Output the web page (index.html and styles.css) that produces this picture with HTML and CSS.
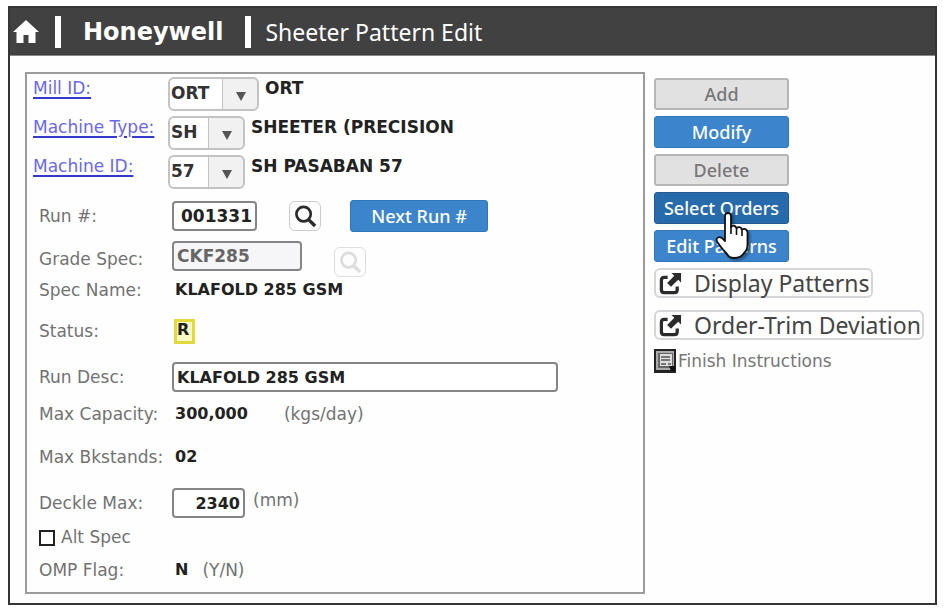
FILE: index.html
```html
<!DOCTYPE html>
<html lang="en">
<head>
<meta charset="utf-8">
<title>Sheeter Pattern Edit</title>
<link rel="stylesheet" href="styles.css">
</head>
<body>
<svg class="symbols" aria-hidden="true">
  <symbol id="search" viewBox="0 0 24 24">
    <circle cx="10" cy="9.500" r="7.500" fill="none" stroke="currentColor" stroke-width="2.800"/>
    <path d="M15.500 15.500 22 22" stroke="currentColor" stroke-width="3.600"/>
  </symbol>
  <symbol id="external" viewBox="0 0 24 24">
    <path d="M9 5.500H5.500Q2.500 5.500 2.500 8.500V18.500Q2.500 21.500 5.500 21.500H16Q19 21.500 19 18.500V15" fill="none" stroke="currentColor" stroke-width="3.400"/>
    <path d="M13 1H23V11L20 8 12.500 15.500 8.500 11.500 16 4Z" fill="currentColor"/>
  </symbol>
</svg>
<div class="frame">
  <header class="topbar">
    <a class="home" href="#" aria-label="Home"><svg viewBox="0 0 26 23"><path d="M13 0 26 12H22.500V23H15.500V15H10.500V23H3.500V12H0Z" fill="#fff"/></svg></a>
    <span class="bar"></span>
    <span class="brand">Honeywell</span>
    <span class="bar"></span>
    <h1>Sheeter Pattern Edit</h1>
  </header>
  <main>
    <form class="panel">
      <div class="row pick">
        <a class="label" href="#">Mill ID:</a>
        <span class="combo wide"><select aria-label="Mill ID"><option>ORT</option></select></span>
        <b class="note">ORT</b>
      </div>
      <div class="row pick">
        <a class="label" href="#">Machine Type:</a>
        <span class="combo"><select aria-label="Machine Type"><option>SH</option></select></span>
        <b class="note">SHEETER (PRECISION</b>
      </div>
      <div class="row pick">
        <a class="label" href="#">Machine ID:</a>
        <span class="combo"><select aria-label="Machine ID"><option>57</option></select></span>
        <b class="note">SH PASABAN 57</b>
      </div>
      <div class="row run">
        <label class="label" for="run">Run #:</label>
        <input class="box run-box" id="run" value="001331">
        <button type="button" class="lookup" aria-label="Find run"><svg><use href="#search"/></svg></button>
        <button type="button" class="btn next">Next Run #</button>
      </div>
      <div class="row grade">
        <label class="label" for="grade">Grade Spec:</label>
        <input class="box grade-box" id="grade" value="CKF285" disabled>
        <button type="button" class="lookup" aria-label="Find grade" disabled><svg><use href="#search"/></svg></button>
      </div>
      <div class="row spec"><span class="label">Spec Name:</span><b class="value">KLAFOLD 285 GSM</b></div>
      <div class="row state"><span class="label">Status:</span><b class="status">R</b></div>
      <div class="row desc">
        <label class="label" for="desc">Run Desc:</label>
        <input class="box desc-box" id="desc" value="KLAFOLD 285 GSM">
      </div>
      <div class="row capacity"><span class="label">Max Capacity:</span><b class="value">300,000</b><span class="unit far">(kgs/day)</span></div>
      <div class="row stands"><span class="label">Max Bkstands:</span><b class="value">02</b></div>
      <div class="row deckle">
        <label class="label" for="deckle">Deckle Max:</label>
        <input class="box deckle-box" id="deckle" value="2340">
        <span class="unit">(mm)</span>
      </div>
      <div class="row alt"><input type="checkbox" id="alt"><label for="alt">Alt Spec</label></div>
      <div class="row omp"><span class="label">OMP Flag:</span><b class="value">N</b><span class="unit yn">(Y/N)</span></div>
    </form>
    <aside>
      <button type="button" class="btn" disabled>Add</button>
      <button type="button" class="btn">Modify</button>
      <button type="button" class="btn" disabled>Delete</button>
      <div class="hover-target">
        <button type="button" class="btn active">Select Orders</button>
        <svg class="pointer" viewBox="0 0 36 50" aria-hidden="true">
          <path d="M10 4Q10 1 13 1T16 4V15Q19 12 21.500 16 25 13.500 27 17.500 31 15.500 32.500 20V32Q32.500 38 29 41 26 46 19 46 14 46 12 42 7 37 3 31 0 27 3 25.500 6 24 9 28L10 29Z" fill="#fff" stroke="#111" stroke-width="1.800" stroke-linejoin="round"/>
          <path d="M16 14V22M21.500 16V23M27 17.500V24" stroke="#111" stroke-width="1.600"/>
        </svg>
      </div>
      <button type="button" class="btn">Edit Patterns</button>
      <a class="open" href="#"><svg><use href="#external"/></svg>Display Patterns</a>
      <a class="open" href="#"><svg><use href="#external"/></svg>Order-Trim Deviation</a>
      <a class="finish" href="#">
        <svg viewBox="0 0 22 24"><path d="M0 0H22V24H0Z" fill="#222"/><path d="M2 2H20V21H2Z" fill="#aaa"/><path d="M4 4H19V19H4Z" fill="#666"/><path d="M6 5H18V17H6Z" fill="#ddd"/><path d="M7 8H16M7 11H16M7 15H12M14 15H17" stroke="#555" stroke-width="1.500"/><path d="M15 17H21V22H17Z" fill="#111"/></svg>Finish Instructions</a>
    </aside>
  </main>
</div>
</body>
</html>
```

FILE: styles.css
```css
* { box-sizing: border-box; }
body {
  margin: 0;
  padding: 6px 7px 6px 8px;
  background: #fff;
  color: #727272;
  font: 17px/20px "DejaVu Sans", Verdana, sans-serif;
}
button, input, select { font: inherit; margin: 0; }
.symbols { display: none; }
.frame { border: 2px solid #353536; background: #fefefe; }

.topbar {
  display: flex;
  align-items: center;
  height: 48px;
  padding: 0 3px;
  background: #414141;
  border-bottom: 1px solid #888;
  color: #fff;
}
.home, .home svg { display: block; width: 26px; height: 23px; }
.bar { width: 6px; height: 32px; margin: 0 16px; background: #fff; }
.brand { padding-left: 6px; margin-right: 6px; font-size: 24px; font-weight: bold; }
.brand + .bar { margin-right: 14px; }
h1 { margin: 0; font: 23px/30px "Noto Sans", sans-serif; }

main { display: flex; align-items: flex-start; gap: 9px; padding: 16px 14px 9px 15px; }
.panel { flex: 1; border: 2px solid #9b9b9b; }
.row { display: flex; align-items: center; }
.label { flex: none; width: 141px; padding-left: 12px; white-space: nowrap; }
.pick { height: 39px; }
.run { height: 50px; }
.grade { height: 36px; }
.spec { height: 26px; }
.state { height: 56px; }
.desc { height: 36px; }
.capacity { height: 38px; }
.stands { height: 47px; }
.deckle { height: 46px; }
.alt { height: 22px; }
.omp { height: 44px; }

a.label {
  padding: 0 0 12px 6px;
  color: #6a68e6;
  text-decoration-color: #3638cc;
  text-decoration-thickness: 2px;
  text-underline-offset: 3px;
}
b { color: #222; }
.note { padding: 0 0 12px 6px; }
.value { padding-left: 7px; font-size: 16px; }
.combo { position: relative; width: 77px; height: 34px; }
.combo.wide { width: 91px; }
select {
  appearance: none;
  width: 100%;
  height: 100%;
  padding: 0 0 2px 1px;
  border: 2px solid #c3c3c3;
  border-radius: 6px;
  background: linear-gradient(90deg, #c3c3c3 1px, #f1f1f1 1px) right / 35px 100% no-repeat #fff;
  color: #333;
  font-weight: bold;
}
.combo::after {
  content: "";
  position: absolute;
  right: 13px;
  top: 15px;
  border: 5px solid transparent;
  border-top: 9px solid #555;
  border-bottom: 0;
  pointer-events: none;
}

.box {
  height: 30px;
  margin-left: 4px;
  padding: 0 3px;
  border: 2px solid #858585;
  border-radius: 4px;
  background: #fff;
  color: #222;
  font-size: 16px;
  font-weight: bold;
}
.run-box { width: 85px; text-align: right; font-size: 17px; }
.grade-box { width: 130px; align-self: flex-start; background: #f6f6f8; color: #666; font-size: 17px; }
.desc-box { width: 386px; }
.deckle-box { width: 73px; text-align: right; }
.lookup {
  display: grid;
  place-items: center;
  width: 32px;
  height: 30px;
  margin-left: 32px;
  padding: 0;
  border: 1px solid #ccc;
  border-radius: 6px;
  background: #fdfdfd;
  color: #2b2b2b;
}
.lookup:disabled { align-self: flex-end; border-color: #dedede; color: #ddd; }
.lookup svg { width: 23px; height: 23px; }
.status { width: 21px; height: 25px; margin-left: 6px; border: 3px solid #e2da3c; background: #fbf8c8; font-size: 16px; line-height: 16px; }
.unit { padding-left: 8px; }
.unit.far { padding-left: 36px; }
.unit.yn { padding-left: 14px; }
.deckle .unit { padding-bottom: 6px; }
input[type="checkbox"] { appearance: none; width: 16px; height: 16px; margin: 2px 6px 0 12px; border: 2px solid #222; background: #fff; }

.btn {
  width: 135px;
  height: 32px;
  padding: 0;
  border: 1px solid #3077ba;
  border-radius: 3px;
  background: #3c84cc;
  color: #fff;
  font: 500 18px/28px "Noto Sans", sans-serif;
}
.btn:disabled { border: 2px solid #b5b5b5; background: #e2e1e2; color: #777; }
.btn.active { background: #276bac; border-color: #215c94; }
.btn.next { width: 138px; margin-left: 29px; }

aside { display: flex; flex-direction: column; align-items: flex-start; gap: 6px; width: 267px; padding-top: 6px; }
.hover-target { position: relative; height: 32px; }
.pointer { position: absolute; left: 61px; top: 20px; width: 36px; height: 50px; z-index: 1; filter: drop-shadow(2px 2px 1px #0005); }
.open {
  display: flex;
  align-items: center;
  height: 30px;
  padding: 0 1px 0 3px;
  border: 2px solid #d7d5da;
  border-radius: 6px;
  color: #444;
  font: 23px/24px "Noto Sans", sans-serif;
  text-decoration: none;
  white-space: nowrap;
}
.open + .open { margin-top: 6px; }
.open svg { width: 23px; height: 23px; margin-right: 12px; color: #2b2b2b; }
.finish { display: flex; align-items: center; gap: 2px; margin-top: 3px; color: #777; text-decoration: none; white-space: nowrap; }
.finish svg { width: 22px; height: 24px; }
```
